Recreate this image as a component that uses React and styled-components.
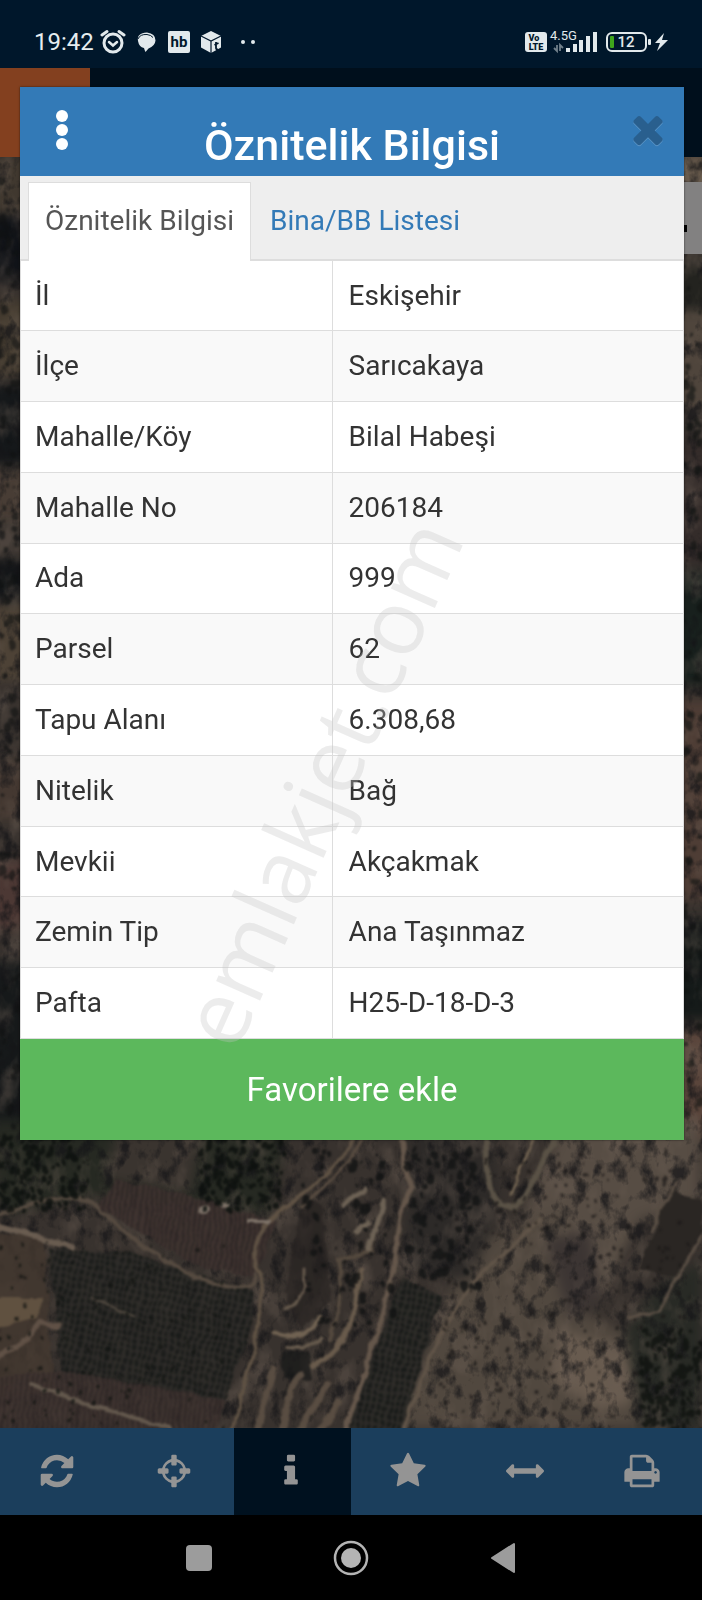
import React from 'react';
import styled, { createGlobalStyle } from 'styled-components';

const GlobalStyle = createGlobalStyle`
  * {
    box-sizing: border-box;
  }

  body {
    margin: 0;
    background-color: #000;
    font-family: Roboto, "Liberation Sans", sans-serif;
  }

  button {
    border: 0;
    padding: 0;
    background: none;
    color: inherit;
    font-family: inherit;
    cursor: pointer;
  }
`;

const Screen = styled.div`
  display: flex;
  flex-direction: column;
  min-height: 100vh;
`;

/* status bar */

const StatusBar = styled.header`
  display: flex;
  justify-content: space-between;
  align-items: center;
  height: 68px;
  padding: 16px 34px 0;
  background-color: #00172b;
  color: #e6edf0;
`;

const StatusGroup = styled.div`
  display: flex;
  align-items: center;
  gap: 6px;
`;

const Clock = styled.span`
  font-size: 24px;
  line-height: 28px;
`;

const StatusSvg = styled.svg`
  display: block;
  flex: none;
`;

/* page behind the dialog */

const Stage = styled.main`
  display: grid;
  flex: 1;
`;

const Backdrop = styled.div`
  grid-area: 1 / 1;
  display: flex;
  flex-direction: column;
`;

const TopBar = styled.div`
  height: 89px;
  background-color: #000f1c;
`;

const MenuToggle = styled.button`
  display: block;
  width: 90px;
  height: 100%;
  background-color: #83401f;
`;

const MapArea = styled.div`
  position: relative;
  flex: 1;
  overflow: hidden;
  background-color: #332c29;
`;

const MapSvg = styled.svg`
  position: absolute;
  inset: 0;
  width: 100%;
  height: 100%;
`;

const MapControl = styled.button`
  position: absolute;
  top: 25px;
  right: 0;
  width: 72px;
  height: 72px;
  background-color: #828181;
`;

/* dialog */

const Dialog = styled.section`
  grid-area: 1 / 1;
  align-self: start;
  position: relative;
  margin: 19px 18px 0 20px;
  background-color: #fff;
  box-shadow: 0 0 2px rgba(0, 0, 0, 0.6);
`;

const DialogHeader = styled.div`
  display: grid;
  grid-template-columns: 72px 1fr 72px;
  align-items: start;
  height: 89px;
  background-color: #337ab7;
  color: #fff;
`;

const DialogTitle = styled.h1`
  margin: 33px 0 0;
  font-size: 43px;
  font-weight: 500;
  line-height: 50px;
  text-align: center;
`;

const DotsButton = styled.button`
  display: flex;
  flex-direction: column;
  align-items: center;
  gap: 2px;
  width: 44px;
  margin: 23px 0 0 20px;
`;

const Dot = styled.span`
  width: 12px;
  height: 12px;
  border-radius: 50%;
  background-color: #fff;
`;

const CloseButton = styled.button`
  justify-self: end;
  margin: 20px 14px 0 0;
  color: #295f8e;

  svg {
    display: block;
    filter: drop-shadow(0 1px 0 #5c95c6);
  }
`;

const TabBar = styled.div`
  display: flex;
  gap: 2px;
  height: 85px;
  padding: 6px 8px 0;
  border-bottom: 2px solid #ddd;
  background-color: #eee;
`;

const Tab = styled.button`
  margin-bottom: -2px;
  padding: 0 16px 2px;
  border: 1px solid ${({ $active }) => ($active ? '#ddd' : 'transparent')};
  border-bottom: 0;
  background-color: ${({ $active }) => ($active ? '#fff' : 'transparent')};
  color: ${({ $active }) => ($active ? '#555' : '#337ab7')};
  font-size: 28px;
  line-height: 40px;
  white-space: nowrap;
`;

const InfoTable = styled.table`
  width: 100%;
  height: 778px;
  border-collapse: collapse;
  table-layout: fixed;
  color: #333;
  font-size: 28px;
  line-height: 36px;
`;

const InfoRow = styled.tr`
  &:nth-child(even) {
    background-color: #f9f9f9;
  }
`;

const Label = styled.th`
  width: 47%;
  padding: 0 14px;
  border: 1px solid #ddd;
  border-top: 0;
  font-weight: 400;
  text-align: left;
`;

const Value = styled.td`
  padding: 0 16px;
  border: 1px solid #ddd;
  border-top: 0;
`;

const FavoriteButton = styled.button`
  display: block;
  width: 100%;
  height: 101px;
  background-color: #5cb85c;
  color: #fff;
  font-size: 33px;
`;

const Watermark = styled.span`
  position: absolute;
  top: 66%;
  left: 45%;
  transform: translate(-50%, -50%) rotate(-66deg);
  color: rgba(195, 195, 195, 0.32);
  font-family: "Open Sans", "Noto Sans", sans-serif;
  font-size: 90px;
  line-height: 1;
  white-space: nowrap;
  pointer-events: none;
`;

/* bottom bars */

const Toolbar = styled.nav`
  display: flex;
  height: 87px;
  background-color: #1b3e5c;
`;

const ToolButton = styled.button`
  display: flex;
  flex: 1;
  justify-content: center;
  align-items: center;
  padding: 0 4px 2px 0;
  background-color: ${({ $active }) => ($active ? '#00111f' : 'transparent')};
  color: #949494;
`;

const SystemNav = styled.nav`
  display: flex;
  justify-content: center;
  align-items: center;
  height: 85px;
  background-color: #000;
`;

const SystemButton = styled.button`
  display: flex;
  justify-content: center;
  width: 152px;
`;

const icons = {
  refresh:
    'M1639 1056q0 5-1 7-64 268-268 434.5t-478 166.5q-146 0-282.5-55t-243.5-157l-129 129q-19 19-45 19t-45-19-19-45v-448q0-26 19-45t45-19h448q26 0 45 19t19 45-19 45l-137 137q71 66 161 102t187 36q134 0 250-65t186-179q11-17 53-117 8-23 30-23h192q13 0 22.5 9.5t9.5 22.5zm25-800v448q0 26-19 45t-45 19h-448q-26 0-45-19t-19-45 19-45l138-138q-148-137-349-137-134 0-250 65t-186 179q-11 17-53 117-8 23-30 23h-199q-13 0-22.5-9.5t-9.5-22.5v-7q65-268 270-434.5t480-166.5q146 0 284 55.5t245 156.5l130-129q19-19 45-19t45 19 19 45z',
  crosshairs:
    'M1325 1024h-109q-26 0-45-19t-19-45v-128q0-26 19-45t45-19h109q-32-108-112.5-188.5t-188.5-112.5v109q0 26-19 45t-45 19h-128q-26 0-45-19t-19-45v-109q-108 32-188.5 112.5t-112.5 188.5h109q26 0 45 19t19 45v128q0 26-19 45t-45 19h-109q32 108 112.5 188.5t188.5 112.5v-109q0-26 19-45t45-19h128q26 0 45 19t19 45v109q108-32 188.5-112.5t112.5-188.5zm339-192v128q0 26-19 45t-45 19h-143q-37 161-154.5 278.5t-278.5 154.5v143q0 26-19 45t-45 19h-128q-26 0-45-19t-19-45v-143q-161-37-278.5-154.5t-154.5-278.5h-143q-26 0-45-19t-19-45v-128q0-26 19-45t45-19h143q37-161 154.5-278.5t278.5-154.5v-143q0-26 19-45t45-19h128q26 0 45 19t19 45v143q161 37 278.5 154.5t154.5 278.5h143q26 0 45 19t19 45z',
  info: 'M1216 1344v128q0 26-19 45t-45 19h-512q-26 0-45-19t-19-45v-128q0-26 19-45t45-19h64v-384h-64q-26 0-45-19t-19-45v-128q0-26 19-45t45-19h384q26 0 45 19t19 45v576h64q26 0 45 19t19 45zm-128-1152v192q0 26-19 45t-45 19h-256q-26 0-45-19t-19-45v-192q0-26 19-45t45-19h256q26 0 45 19t19 45z',
  star: 'M1728 647q0 22-26 48l-363 354 86 500q1 7 1 20 0 21-10.5 35.5t-30.5 14.5q-19 0-40-12l-449-236-449 236q-22 12-40 12-21 0-31.5-14.5t-10.5-35.5q0-6 2-20l86-500-364-354q-25-27-25-48 0-37 56-46l502-73 225-455q19-41 49-41t49 41l225 455 502 73q56 9 56 46z',
  arrows:
    'M1792 896q0 26-19 45l-256 256q-19 19-45 19t-45-19-19-45v-128h-1024v128q0 26-19 45t-45 19-45-19l-256-256q-19-19-19-45t19-45l256-256q19-19 45-19t45 19 19 45v128h1024v-128q0-26 19-45t45-19 45 19l256 256q19 19 19 45z',
  print:
    'M448 1536h896v-256h-896v256zm0-640h896v-384h-160q-40 0-68-28t-28-68v-160h-640v640zm1152 64q0-26-19-45t-45-19-45 19-19 45 19 45 45 19 45-19 19-45zm128 0v416q0 13-9.5 22.5t-22.5 9.5h-224v160q0 40-28 68t-68 28h-960q-40 0-68-28t-28-68v-160h-224q-13 0-22.5-9.5t-9.5-22.5v-416q0-79 56.5-135.5t135.5-56.5h64v-544q0-40 28-68t68-28h672q40 0 88 20t76 48l152 152q28 28 48 76t20 88v256h64q79 0 135.5 56.5t56.5 135.5z',
  times:
    'M1490 1322q0 40-28 68l-136 136q-28 28-68 28t-68-28l-294-294-294 294q-28 28-68 28t-68-28l-136-136q-28-28-28-68t28-68l294-294-294-294q-28-28-28-68t28-68l136-136q28-28 68-28t68 28l294 294 294-294q28-28 68-28t68 28l136 136q28 28 28 68t-28 68l-294 294 294 294q28 28 28 68z',
};

const Icon = ({ name, size }) => (
  <svg width={size} height={size} viewBox="0 0 1792 1792" fill="currentColor" aria-hidden="true">
    <path d={icons[name]} />
  </svg>
);

const tools = [
  { icon: 'refresh', label: 'Yenile' },
  { icon: 'crosshairs', label: 'Konum' },
  { icon: 'info', label: 'Bilgi' },
  { icon: 'star', label: 'Favoriler' },
  { icon: 'arrows', label: 'Ölçüm' },
  { icon: 'print', label: 'Yazdır' },
];

const rows = [
  ['İl', 'Eskişehir'],
  ['İlçe', 'Sarıcakaya'],
  ['Mahalle/Köy', 'Bilal Habeşi'],
  ['Mahalle No', '206184'],
  ['Ada', '999'],
  ['Parsel', '62'],
  ['Tapu Alanı', '6.308,68'],
  ['Nitelik', 'Bağ'],
  ['Mevkii', 'Akçakmak'],
  ['Zemin Tip', 'Ana Taşınmaz'],
  ['Pafta', 'H25-D-18-D-3'],
];

// small seeded generator, so the trees stay put between renders
const scatter = (seed, count, x, y, w, h, min, max) => {
  let s = seed;
  const next = () => {
    s = (s * 16807) % 2147483647;
    return s / 2147483647;
  };
  return Array.from({ length: count }, () => ({
    x: Math.round(x + next() * w),
    y: Math.round(y + next() * h),
    r: min + next() * (max - min),
  }));
};

const Trees = ({ list, fill, opacity = 0.8 }) => (
  <g fill={fill} opacity={opacity}>
    {list.map((t, i) => (
      <ellipse key={i} cx={t.x} cy={t.y} rx={t.r} ry={t.r * 1.3} />
    ))}
  </g>
);

const SatelliteMap = () => (
  <MapSvg viewBox="0 157 702 1271" preserveAspectRatio="xMidYMax slice" aria-hidden="true">
    <defs>
      <filter id="soft" x="-20%" y="-20%" width="140%" height="140%" colorInterpolationFilters="sRGB">
        <feGaussianBlur stdDeviation="6" />
      </filter>
      <filter id="edge" x="-10%" y="-10%" width="120%" height="120%" colorInterpolationFilters="sRGB">
        <feTurbulence type="fractalNoise" baseFrequency="0.05" numOctaves="3" seed="4" />
        <feDisplacementMap in="SourceGraphic" scale="8" xChannelSelector="R" yChannelSelector="G" />
        <feGaussianBlur stdDeviation="0.9" />
      </filter>
      <filter id="speckle" x="0" y="0" width="100%" height="100%" colorInterpolationFilters="sRGB">
        <feTurbulence type="fractalNoise" baseFrequency="0.07 0.05" numOctaves="4" seed="8" />
        <feColorMatrix values="0 0 0 0 0.08  0 0 0 0 0.08  0 0 0 0 0.09  3.5 0 0 0 -1.7" />
        <feGaussianBlur stdDeviation="0.6" />
      </filter>
      <filter id="glow" x="0" y="0" width="100%" height="100%" colorInterpolationFilters="sRGB">
        <feTurbulence type="fractalNoise" baseFrequency="0.04 0.025" numOctaves="4" seed="21" />
        <feColorMatrix values="0 0 0 0 0.42  0 0 0 0 0.37  0 0 0 0 0.33  0 3 0 0 -1.4" />
      </filter>
      <pattern id="orchard" width="6" height="7" patternUnits="userSpaceOnUse" patternTransform="rotate(12)">
        <rect width="6" height="7" fill="#2d2b28" />
        <ellipse cx="3" cy="3" rx="2" ry="3" fill="#171a18" />
      </pattern>
      <pattern id="vines" width="5" height="8" patternUnits="userSpaceOnUse" patternTransform="rotate(6)">
        <rect width="5" height="8" fill="#3f3330" />
        <rect width="2" height="8" fill="#2f2726" />
      </pattern>
    </defs>

    <rect y="157" width="702" height="1271" fill="#38322e" />

    {/* strips left and right of the dialog */}
    <g filter="url(#soft)">
      <rect x="-10" y="157" width="40" height="58" fill="#40382f" />
      <rect x="-10" y="215" width="40" height="65" fill="#101318" />
      <rect x="-10" y="300" width="40" height="75" fill="#453c30" />
      <rect x="-10" y="385" width="40" height="80" fill="#15181a" />
      <rect x="-10" y="470" width="40" height="50" fill="#483d35" />
      <rect x="-10" y="560" width="40" height="40" fill="#141719" />
      <rect x="-10" y="605" width="40" height="75" fill="#4d4236" />
      <rect x="-10" y="760" width="40" height="60" fill="#443831" />
      <rect x="-10" y="860" width="40" height="70" fill="#4c3834" />
      <rect x="-10" y="960" width="40" height="180" fill="#16191a" />
      <rect x="675" y="157" width="40" height="30" fill="#6a5c4c" />
      <rect x="675" y="260" width="40" height="50" fill="#23231f" />
      <rect x="675" y="310" width="40" height="100" fill="#4f453c" />
      <rect x="675" y="440" width="40" height="130" fill="#342c2a" />
      <rect x="675" y="570" width="40" height="115" fill="#18201d" />
      <rect x="675" y="700" width="40" height="200" fill="#4e3d35" />
      <rect x="675" y="920" width="40" height="100" fill="#151a19" />
      <rect x="675" y="1030" width="40" height="110" fill="#5a453b" />
    </g>

    {/* bare hillside */}
    <g filter="url(#soft)">
      <path d="M-10 1120H290L270 1215 95 1195 0 1215Z" fill="#262922" />
      <path d="M120 1120H205L190 1195 105 1180Z" fill="#3a342f" />
      <path d="M565 1120H700V1200L640 1220 600 1300 480 1290 530 1200Z" fill="#574d44" />
      <path d="M480 1240 560 1210 580 1310 640 1340 650 1428H400L440 1310Z" fill="#51483f" />
      <path d="M560 1330 630 1350 645 1400 600 1410 550 1380Z" fill="#685b4f" />
      <path d="M545 1240 590 1230 600 1300 570 1320Z" fill="#3c3533" />
      <path d="M655 1290 702 1260V1428H640L625 1330Z" fill="#282a25" />
      <path d="M410 1120H490L500 1210 470 1280 405 1270Z" fill="#2d2a28" />
    </g>

    <rect y="157" width="702" height="1271" filter="url(#glow)" opacity="0.4" />
    <rect y="157" width="702" height="1271" filter="url(#speckle)" opacity="0.7" />

    <g filter="url(#edge)">
      <path d="M118 1179 190 1197 276 1222 256 1276 205 1270 98 1207Z" fill="url(#vines)" opacity="0.9" />
      <path d="M-5 1232 45 1240 48 1310 55 1390-5 1400Z" fill="#44382f" opacity="0.8" />
      <path d="M-5 1298H42L36 1317-5 1328Z" fill="#605140" />
      <path d="M48 1248 130 1252 252 1292 250 1330 226 1400 62 1376 56 1310Z" fill="url(#orchard)" opacity="0.85" />
      <path d="M62 1370 226 1400 215 1435H-5V1378Z" fill="url(#vines)" opacity="0.8" />
      <path d="M402 1278 442 1296 425 1350 402 1430H348L378 1345Z" fill="url(#orchard)" opacity="0.9" />
      <path d="M670 1190 702 1200V1230L676 1276 640 1268Z" fill="#2a2623" />
      <path d="M302 1200 322 1205 330 1300 300 1330 285 1290Z" fill="#262221" opacity="0.7" />
      <path d="M280 1350 308 1352 312 1380 285 1378Z" fill="#161717" opacity="0.7" />

      <g fill="none" stroke="#5f5244" strokeLinecap="round">
        <path d="M356 1130Q345 1165 292 1202T262 1275Q262 1330 232 1430" strokeWidth="4" />
        <path d="M366 1130Q350 1170 302 1206" stroke="#574b40" strokeWidth="3" />
        <path d="M402 1130Q400 1160 412 1186 396 1215 396 1255 388 1305 372 1350 362 1390 344 1430" stroke="#65574b" strokeWidth="5" />
        <path d="M486 1130Q486 1185 496 1200 512 1214 525 1196L560 1130" stroke="#5a5246" strokeWidth="6" />
        <path d="M510 1196 536 1132" stroke="#706250" strokeWidth="3" />
        <path d="M-5 1226 70 1246" stroke="#695c50" strokeWidth="6" />
        <path d="M0 1215Q60 1190 92 1202 145 1255 200 1278T256 1274" stroke="#554a40" strokeWidth="4" />
        <path d="M-5 1358Q28 1345 40 1322L58 1326" stroke="#605146" strokeWidth="6" />
        <path d="M30 1384 90 1405 170 1428" stroke="#63584d" strokeWidth="4" />
        <path d="M92 1298 134 1318" stroke="#4b443c" strokeWidth="3" />
        <path d="M275 1332Q310 1345 320 1316" stroke="#706252" strokeWidth="5" />
        <path d="M286 1346Q315 1350 322 1338" stroke="#65594c" strokeWidth="4" />
        <path d="M312 1366Q350 1345 356 1295L362 1270" stroke="#695b4c" strokeWidth="5" />
        <path d="M330 1340Q345 1300 338 1260L372 1252 376 1225" stroke="#54493e" strokeWidth="4" />
        <path d="M286 1310Q306 1300 305 1270" stroke="#65594c" strokeWidth="3" />
        <path d="M345 1205 364 1188M370 1250 384 1200M356 1232 368 1222" stroke="#6d6255" strokeWidth="5" />
        <path d="M258 1430 274 1370M282 1430Q290 1380 300 1375M300 1430 328 1385M320 1430 338 1402" stroke="#594d42" strokeWidth="7" />
        <path d="M404 1430 432 1350 470 1285 540 1220" stroke="#605448" strokeWidth="4" />
        <path d="M678 1182 650 1230M702 1235 660 1310 628 1318" stroke="#594e44" strokeWidth="3" />
      </g>
      <g fill="#7c7167">
        <ellipse cx="204" cy="1210" rx="6" ry="4" />
        <ellipse cx="226" cy="1205" rx="4" ry="3" />
        <rect x="246" y="1220" width="24" height="4" />
      </g>
    </g>

    <g filter="url(#edge)">
      <Trees list={scatter(110011, 150, 0, 1135, 88, 75, 1, 3)} fill="#0d110e" />
      <Trees list={scatter(190019, 150, 200, 1135, 85, 75, 1, 3)} fill="#0d110e" />
      <Trees list={scatter(50005, 60, 300, 1150, 95, 180, 1, 4)} fill="#121313" />
      <Trees list={scatter(410041, 90, 405, 1140, 75, 150, 1, 4)} fill="#131414" />
      <Trees list={scatter(770077, 260, 440, 1150, 250, 270, 1, 2)} fill="#1a1817" opacity={0.7} />
      <Trees list={scatter(310031, 150, 640, 1330, 62, 100, 1, 3)} fill="#101310" />
      <Trees list={scatter(620062, 120, 0, 1240, 230, 190, 1, 2)} fill="#101310" opacity={0.7} />
      <Trees list={scatter(30003, 110, 0, 170, 20, 960, 1, 4)} fill="#0f1112" opacity={0.6} />
      <Trees list={scatter(90009, 80, 684, 260, 18, 860, 1, 4)} fill="#101312" opacity={0.6} />
    </g>
  </MapSvg>
);

const StatusLeft = () => (
  <StatusGroup>
    <Clock>19:42</Clock>
    <StatusSvg width="156" height="28" viewBox="100 28 156 28" fill="#e2e9ec">
      <g fill="none" stroke="#e2e9ec" strokeWidth="3" strokeLinecap="round">
        <circle cx="113" cy="43" r="9" />
        <path d="M102 35 107 31.500M124 35 119 31.500" />
        <path d="M109 42 113 45.500 117 42" strokeWidth="2.500" />
      </g>
      <path d="M138 41q-1.500-8 9-8.500q8.500 1 8.500 8q-.5 5.500-7 8l-3 3.500q-1-2-1.500-4q-5-1-6-7z" />
      <path d="M138 39q2-5 9-4.500q4 .5 6 3" fill="none" stroke="#00172b" strokeWidth="1" />
      <rect x="168" y="31" width="22" height="22" rx="2" />
      <text x="179" y="47" textAnchor="middle" fontSize="15" fontWeight="700" fill="#00172b">
        hb
      </text>
      <path d="M211 31 221 36V47.500L211 53 201 47.500V36Z" />
      <path d="M201 36 211 41 221 36M211 41V53" fill="none" stroke="#00172b" strokeWidth="1.200" />
      <path d="M216 42v6q0 2 2 1M214.500 45l4-2" fill="none" stroke="#00172b" strokeWidth="1.800" />
      <circle cx="243" cy="42" r="2" />
      <circle cx="253" cy="42" r="2" />
    </StatusSvg>
  </StatusGroup>
);

const StatusRight = () => (
  <StatusSvg width="144" height="28" viewBox="524 28 144 28" fill="#e2e9ec">
    <rect x="525" y="32" width="22" height="20" rx="3" />
    <g fill="#00172b" fontWeight="900" textAnchor="middle">
      <text x="534" y="41" fontSize="9">
        Vo
      </text>
      <text x="536" y="50" fontSize="9">
        LTE
      </text>
    </g>
    <text x="550" y="40" fontSize="13">
      4.5G
    </text>
    <path d="M557 45v6l-3-3M560 51v-6l3 3" fill="none" stroke="#71808b" strokeWidth="1.800" />
    <path d="M566 48h4v4h-4zM573 44h4v8h-4zM579 40h4v12h-4zM586 36h4v16h-4zM593 32h4v20h-4z" />
    <rect x="607" y="33" width="39" height="18" rx="5" fill="none" stroke="#e2e9ec" strokeWidth="2" />
    <rect x="610" y="36" width="4" height="12" rx="1" fill="#3fa51b" />
    <rect x="648" y="39" width="3" height="6" rx="1" />
    <text x="626" y="47" textAnchor="middle" fontSize="15" fontWeight="500">
      12
    </text>
    <path d="M664 33 655 43h5l-3 8 11-11h-6z" />
  </StatusSvg>
);

const App = () => (
  <>
    <GlobalStyle />
    <Screen>
      <StatusBar>
        <StatusLeft />
        <StatusRight />
      </StatusBar>
      <Stage>
        <Backdrop>
          <TopBar>
            <MenuToggle aria-label="Menü" />
          </TopBar>
          <MapArea>
            <SatelliteMap />
            <MapControl aria-label="Katmanlar">
              <svg width="72" height="72" viewBox="0 0 72 72">
                <rect x="18" y="43" width="39" height="7" />
              </svg>
            </MapControl>
          </MapArea>
        </Backdrop>
        <Dialog role="dialog" aria-labelledby="dialog-title">
          <DialogHeader>
            <DotsButton aria-label="Seçenekler">
              <Dot />
              <Dot />
              <Dot />
            </DotsButton>
            <DialogTitle id="dialog-title">Öznitelik Bilgisi</DialogTitle>
            <CloseButton aria-label="Kapat">
              <Icon name="times" size={44} />
            </CloseButton>
          </DialogHeader>
          <TabBar role="tablist">
            <Tab role="tab" aria-selected="true" $active>
              Öznitelik Bilgisi
            </Tab>
            <Tab role="tab" aria-selected="false">
              Bina/BB Listesi
            </Tab>
          </TabBar>
          <InfoTable>
            <tbody>
              {rows.map(([label, value]) => (
                <InfoRow key={label}>
                  <Label scope="row">{label}</Label>
                  <Value>{value}</Value>
                </InfoRow>
              ))}
            </tbody>
          </InfoTable>
          <FavoriteButton>Favorilere ekle</FavoriteButton>
          <Watermark>emlakjet.com</Watermark>
        </Dialog>
      </Stage>
      <Toolbar>
        {tools.map(({ icon, label }) => (
          <ToolButton key={icon} aria-label={label} $active={icon === 'info'}>
            <Icon name={icon} size={38} />
          </ToolButton>
        ))}
      </Toolbar>
      <SystemNav>
        <SystemButton aria-label="Son uygulamalar">
          <svg width="36" height="36" viewBox="0 0 36 36">
            <rect x="5" y="5" width="26" height="26" rx="4" fill="#9c9c9c" />
          </svg>
        </SystemButton>
        <SystemButton aria-label="Ana ekran">
          <svg width="36" height="36" viewBox="0 0 36 36">
            <circle cx="18" cy="18" r="16" fill="none" stroke="#b4b4b4" strokeWidth="2.500" />
            <circle cx="18" cy="18" r="10" fill="#b4b4b4" />
          </svg>
        </SystemButton>
        <SystemButton aria-label="Geri">
          <svg width="36" height="36" viewBox="0 0 36 36">
            <path d="M7 18 29 4V32Z" fill="#9c9c9c" stroke="#9c9c9c" strokeWidth="2" strokeLinejoin="round" />
          </svg>
        </SystemButton>
      </SystemNav>
    </Screen>
  </>
);

export default App;
